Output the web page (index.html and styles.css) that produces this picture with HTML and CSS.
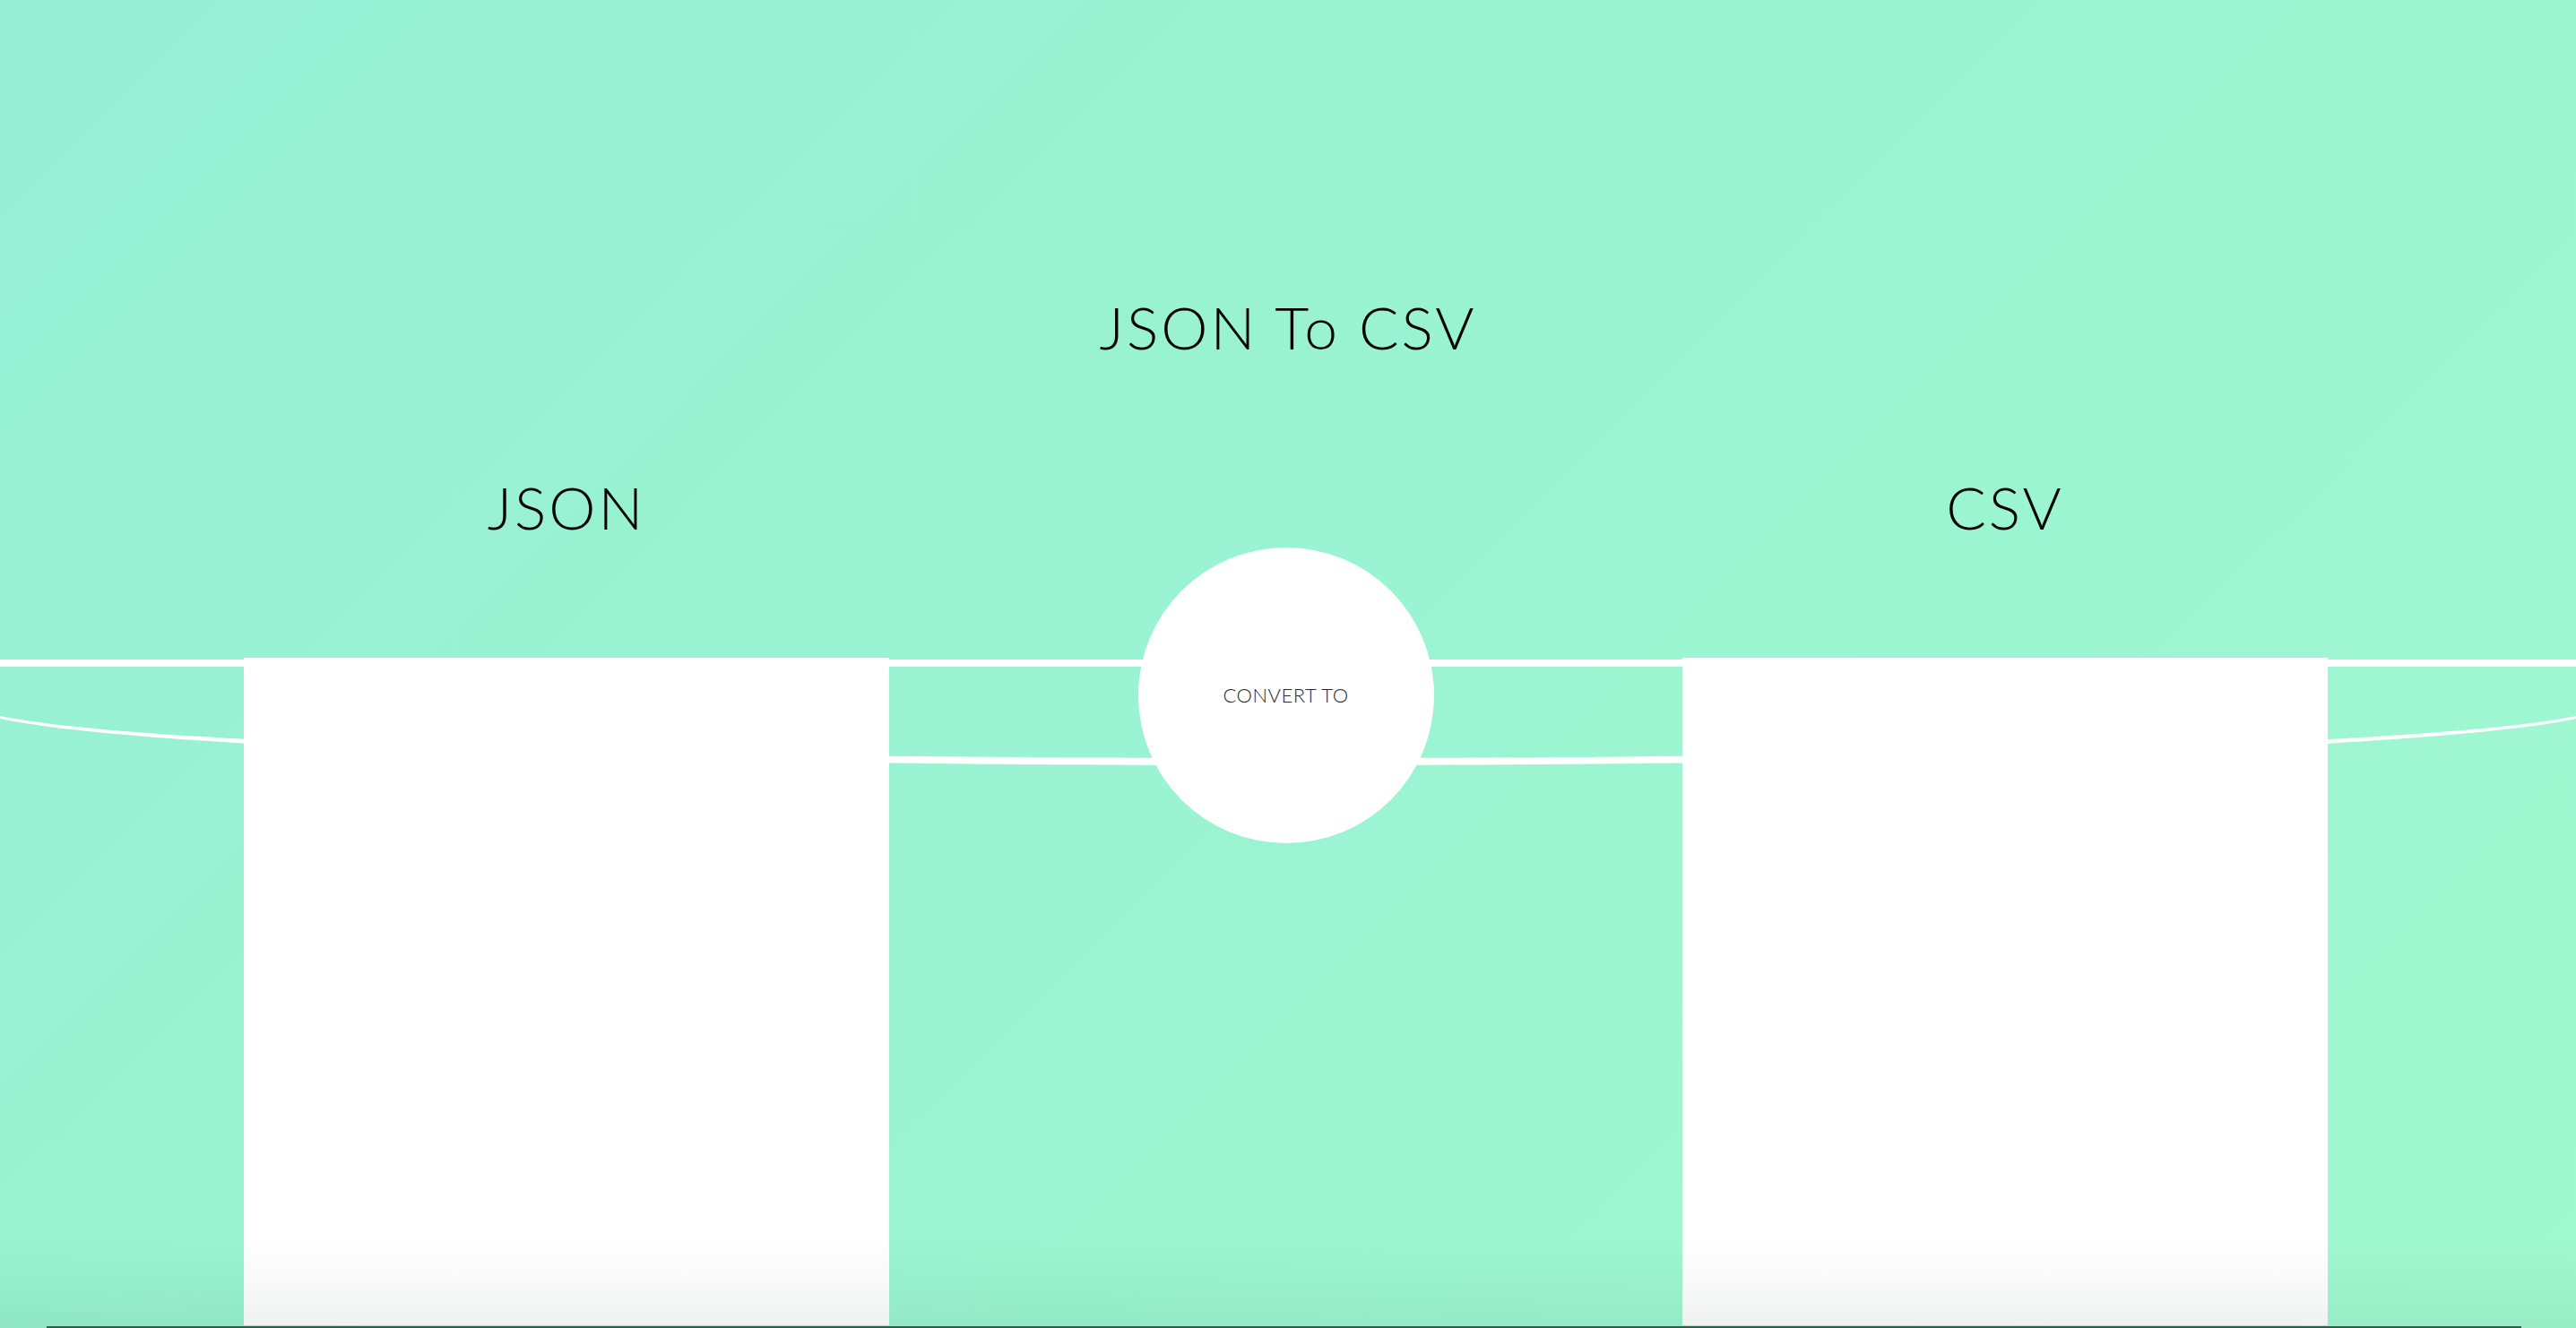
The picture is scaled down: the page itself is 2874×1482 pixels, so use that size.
FILE: index.html
```html
<!DOCTYPE html>
<html lang="en">
<head>
<meta charset="utf-8">
<title>JSON To CSV</title>
<link rel="stylesheet" href="styles.css">
</head>
<body>
<div class="page">
  <svg class="decor" width="2874" height="1482" viewBox="0 0 2874 1482" aria-hidden="true">
    <rect x="0" y="736" width="2874" height="8" fill="#ffffff"/>
    <path fill="#ffffff" d="M0,799 C150,830 700,846 1437,846 C2174,846 2724,830 2874,799 L2874,802 C2724,834 2174,854 1437,854 C700,854 150,834 0,802 Z"/>
  </svg>
  <main class="content">
    <h1 class="title">JSON To CSV</h1>
    <section class="converter">
      <div class="pane">
        <h2 class="pane-label">JSON</h2>
        <textarea class="pane-input" spellcheck="false"></textarea>
      </div>
      <div class="middle">
        <button class="convert" type="button">CONVERT TO</button>
      </div>
      <div class="pane">
        <h2 class="pane-label">CSV</h2>
        <textarea class="pane-input" spellcheck="false"></textarea>
      </div>
    </section>
  </main>
  <div class="bottom-shade"></div>
  <div class="bottom-edge"></div>
</div>
</body>
</html>
```
FILE: styles.css
```css
html, body {
  margin: 0;
  padding: 0;
  width: 2874px;
  height: 1482px;
  overflow: hidden;
}

body {
  font-family: "Lato", "Open Sans", "Liberation Sans", sans-serif;
  background: linear-gradient(135deg, #96efd3 0%, #9af4d2 50%, #a1f9d0 100%);
}

.page {
  position: relative;
  width: 2874px;
  height: 1482px;
}

.decor {
  position: absolute;
  left: 0;
  top: 0;
  z-index: 0;
}

.content {
  position: relative;
  z-index: 1;
  display: flex;
  flex-direction: column;
  align-items: stretch;
}

.title {
  margin: 0;
  padding-top: 325px;
  font-size: 66px;
  line-height: 80px;
  font-weight: 300;
  color: #000;
  text-align: center;
  letter-spacing: 3px;
}

.converter {
  margin-top: 121px;
  margin-left: 272px;
  display: grid;
  grid-template-columns: 720px 885px 720px;
}

.pane {
  display: flex;
  flex-direction: column;
}

.pane-label {
  margin: 0 0 128px 0;
  font-size: 66px;
  line-height: 80px;
  font-weight: 300;
  color: #000;
  text-align: center;
  letter-spacing: 3px;
}

.pane-input {
  display: block;
  width: 720px;
  height: 745px;
  box-sizing: border-box;
  margin: 0;
  padding: 20px;
  border: 0;
  outline: none;
  resize: none;
  background: #ffffff;
  font-family: "Liberation Mono", monospace;
  font-size: 20px;
}

.middle {
  display: flex;
  justify-content: center;
  align-items: flex-start;
  padding-top: 85px;
}

.convert {
  width: 330px;
  height: 330px;
  border-radius: 50%;
  border: 0;
  background: #ffffff;
  padding: 0 0 2px 0;
  font-family: "Lato", "Open Sans", "Liberation Sans", sans-serif;
  font-size: 22px;
  font-weight: 300;
  letter-spacing: 0.5px;
  color: #2a2a2a;
  display: flex;
  align-items: center;
  justify-content: center;
  cursor: pointer;
}

.bottom-shade {
  position: absolute;
  left: 0;
  right: 0;
  bottom: 0;
  height: 100px;
  z-index: 2;
  pointer-events: none;
  background: linear-gradient(to bottom, rgba(0, 40, 20, 0) 0%, rgba(0, 40, 20, 0.06) 100%);
}

.bottom-edge {
  position: absolute;
  left: 52px;
  right: 61px;
  bottom: 0;
  height: 2px;
  z-index: 3;
  background: #2d5f4d;
}
```
